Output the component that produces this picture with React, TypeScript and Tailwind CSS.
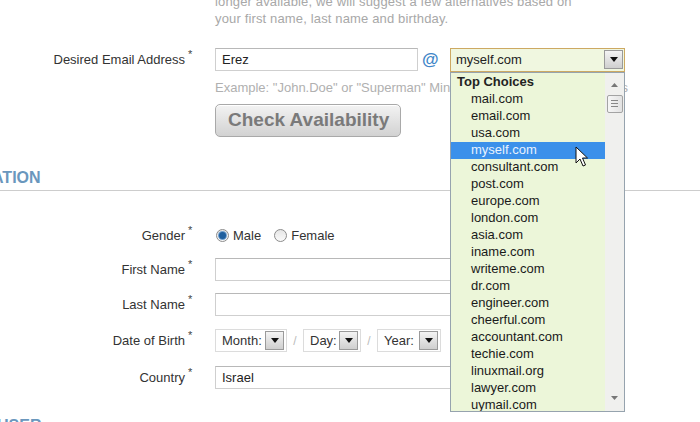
const domains = [
  'mail.com',
  'email.com',
  'usa.com',
  'myself.com',
  'consultant.com',
  'post.com',
  'europe.com',
  'london.com',
  'asia.com',
  'iname.com',
  'writeme.com',
  'dr.com',
  'engineer.com',
  'cheerful.com',
  'accountant.com',
  'techie.com',
  'linuxmail.org',
  'lawyer.com',
  'uymail.com',
];

function Label({ text }: { text: string }) {
  return (
    <div className="flex w-[215px] shrink-0 items-center">
      <span className="w-[185px] text-right text-[13px] text-[#333]">{text}</span>
      <span className="relative -top-[5px] ml-[3px] text-[11px] text-[#444]">*</span>
    </div>
  );
}

function Arrow({ className = '' }: { className?: string }) {
  return (
    <span
      className={`flex h-[19px] w-[19px] shrink-0 items-center justify-center border border-[#9a9a9a] bg-gradient-to-b from-[#f4f4f4] to-[#cfcfcf] ${className}`}
    >
      <svg width="8" height="5" viewBox="0 0 8 5">
        <path d="M0 0 H8 L4 5 Z" fill="#111" />
      </svg>
    </span>
  );
}

function TextBox({ value = '', width = 'w-[300px]' }: { value?: string; width?: string }) {
  return (
    <div
      className={`flex h-[23px] items-center border border-[#cfcfcf] border-t-[#b8b8b8] bg-white pl-[6px] text-[13px] text-[#222] ${width}`}
    >
      {value}
    </div>
  );
}

function DatePart({ label, width }: { label: string; width: string }) {
  return (
    <div
      className={`flex h-[23px] items-center justify-between border border-[#dcdcdc] bg-white pl-[6px] pr-[2px] text-[13px] text-[#333] ${width}`}
    >
      {label}
      <Arrow />
    </div>
  );
}

function Radio({ checked }: { checked?: boolean }) {
  return (
    <span className="flex h-[13px] w-[13px] items-center justify-center rounded-full border border-[#8c8c8c] bg-gradient-to-b from-[#e6e6e6] to-[#fafafa]">
      {checked && <span className="h-[7px] w-[7px] rounded-full bg-[#1f5f9e] shadow-[0_0_0_1px_#6f9fce]" />}
    </span>
  );
}

export default function App() {
  return (
    <div className="relative h-[422px] w-[700px] overflow-hidden bg-white font-['Liberation_Sans',Arial,sans-serif]">
      <div className="flex flex-col">
        {/* intro text */}
        <p className="-mt-[7px] pl-[215px] text-[13px] leading-[17px] tracking-[0.15px] text-[#a8a8a8]">
          longer available, we will suggest a few alternatives based on
          <br />
          your first name, last name and birthday.
        </p>

        {/* email row */}
        <div className="mt-[21px] flex h-[23px] items-center">
          <Label text="Desired Email Address" />
          <TextBox value="Erez" width="w-[203px]" />
          <span className="ml-[4px] w-[28px] text-[17px] font-bold text-[#3f86c8]">@</span>
          <div className="relative z-10">
            <div className="flex h-[24px] w-[175px] items-center justify-between border border-[#cda962] bg-[#f0f7e0] pl-[5px] pr-[1px] text-[13px] text-[#222]">
              myself.com
              <Arrow />
            </div>

            {/* open dropdown list */}
            <div className="absolute left-0 top-full flex h-[340px] w-[175px] overflow-hidden border border-[#96a3ae] bg-[#ecf6d9]">
              <div className="flex-1 pt-[1px]">
                <div className="flex h-[17px] items-center pl-[6px] text-[13px] font-bold text-[#222]">
                  Top Choices
                </div>
                {domains.map((d) => (
                  <div
                    key={d}
                    className={`flex h-[17px] items-center pl-[20px] text-[13px] ${
                      d === 'myself.com' ? 'bg-[#3b90ea] text-[#e8f2ff]' : 'text-[#1a1a1a]'
                    }`}
                  >
                    {d}
                  </div>
                ))}
              </div>
              <div className="flex w-[19px] flex-col items-center bg-[#f0f0ee]">
                <svg className="mt-[10px]" width="7" height="4" viewBox="0 0 7 4">
                  <path d="M0 4 H7 L3.5 0 Z" fill="#777" />
                </svg>
                <div className="mt-[8px] flex h-[18px] w-[16px] flex-col items-center justify-center gap-[2px] rounded-[2px] border border-[#a3a3a3] bg-gradient-to-r from-[#f6f6f6] to-[#e2e2e2]">
                  <span className="h-px w-[7px] bg-[#888]" />
                  <span className="h-px w-[7px] bg-[#888]" />
                  <span className="h-px w-[7px] bg-[#888]" />
                </div>
                <svg className="mt-auto mb-[11px]" width="7" height="4" viewBox="0 0 7 4">
                  <path d="M0 0 H7 L3.5 4 Z" fill="#777" />
                </svg>
              </div>
            </div>
          </div>
        </div>

        <p className="mt-[8px] whitespace-nowrap pl-[215px] text-[13px] leading-[17px] text-[#b0b0b0]">
          Example: "John.Doe" or "Superman" Minimum 3 characters - no spaces
        </p>

        <div className="mt-[8px] pl-[215px]">
          <button className="flex h-[33px] w-[186px] items-center rounded-[5px] border border-[#a9a9a9] bg-gradient-to-b from-[#f3f3f3] to-[#d2d2d2] pl-[12px] text-[19px] font-bold text-[#7a7a7a] shadow-[inset_0_1px_0_#fff]">
            Check Availability
          </button>
        </div>

        {/* section heading */}
        <div className="mt-[32px] border-b border-[#cdcdcd] pb-[3px]">
          <h2 className="-ml-[8px] text-[16px] font-bold leading-[18px] text-[#6a97bd]">ATION</h2>
        </div>

        <div className="mt-[33px] flex h-[23px] items-center">
          <Label text="Gender" />
          <div className="flex items-center pl-[1px] text-[13px] text-[#333]">
            <Radio checked />
            <span className="ml-[4px]">Male</span>
            <span className="ml-[13px]">
              <Radio />
            </span>
            <span className="ml-[4px]">Female</span>
          </div>
        </div>

        <div className="mt-[11px] flex h-[23px] items-center">
          <Label text="First Name" />
          <TextBox />
        </div>

        <div className="mt-[12px] flex h-[23px] items-center">
          <Label text="Last Name" />
          <TextBox />
        </div>

        <div className="mt-[13px] flex h-[23px] items-center">
          <Label text="Date of Birth" />
          <DatePart label="Month:" width="w-[72px]" />
          <span className="w-[16px] text-center text-[12px] text-[#bbb]">/</span>
          <DatePart label="Day:" width="w-[58px]" />
          <span className="w-[16px] text-center text-[12px] text-[#bbb]">/</span>
          <DatePart label="Year:" width="w-[64px]" />
        </div>

        <div className="mt-[14px] flex h-[23px] items-center">
          <Label text="Country" />
          <TextBox value="Israel" />
        </div>

        <h2 className="mt-[28px] -ml-[3px] text-[16px] font-bold leading-[18px] text-[#6a97bd]">USER</h2>
      </div>

      {/* mouse pointer over the list */}
      <svg className="absolute left-[575px] top-[146px] z-20" width="14" height="22" viewBox="0 0 14 22">
        <path
          d="M1 1 L1 17 L5 13 L8 20 L10.5 19 L7.5 12 L12.5 12 Z"
          fill="#fff"
          stroke="#111"
          strokeWidth="1"
          strokeLinejoin="round"
        />
      </svg>
    </div>
  );
}
